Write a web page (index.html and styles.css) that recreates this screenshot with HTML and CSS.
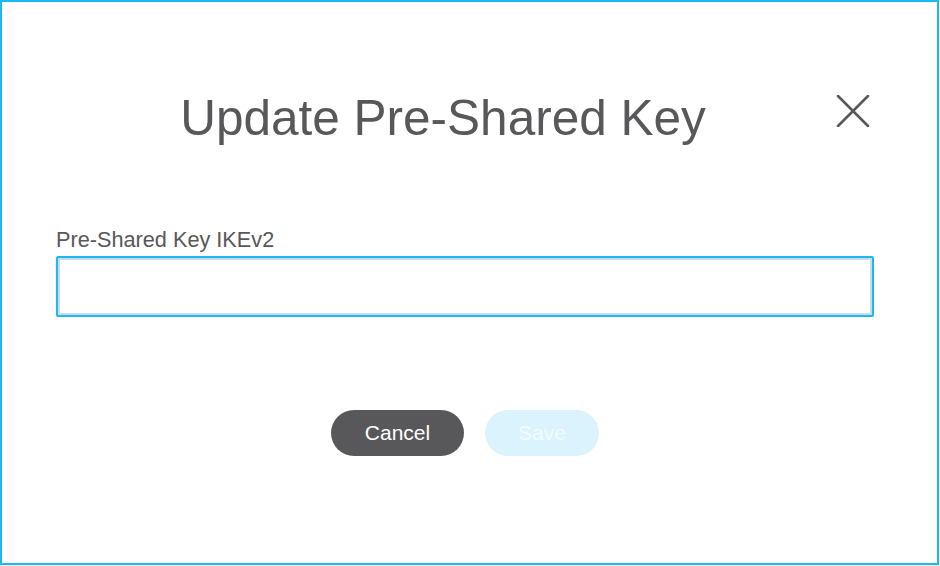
FILE: index.html
```html
<!DOCTYPE html>
<html lang="en">
<head>
<meta charset="utf-8">
<title>Update Pre-Shared Key</title>
<link rel="stylesheet" href="styles.css">
</head>
<body>
<div class="dialog">
  <div class="header">
    <h1 class="title">Update Pre-Shared Key</h1>
    <button class="close" aria-label="Close">
      <svg width="34" height="32" viewBox="0 0 34 32">
        <path d="M2 1 L32 31 M32 1 L2 31" stroke="#58585a" stroke-width="2.6" stroke-linecap="round" fill="none"/>
      </svg>
    </button>
  </div>
  <label class="label" for="psk">Pre-Shared Key IKEv2</label>
  <input class="field" id="psk" type="text">
  <div class="actions">
    <button class="btn btn-cancel">Cancel</button>
    <button class="btn btn-save" disabled>Save</button>
  </div>
</div>
</body>
</html>
```
FILE: styles.css
```css
html, body {
  margin: 0;
  padding: 0;
  background: #ffffff;
}
body {
  font-family: "Liberation Sans", Arial, sans-serif;
  color: #58585a;
}
.dialog {
  box-sizing: border-box;
  width: 939px;
  height: 565px;
  border: 2px solid #1cb9f0;
  padding: 88px 63px 0 54px;
  display: flex;
  flex-direction: column;
  background: #fff;
}
.header {
  display: flex;
  align-items: flex-start;
}
.title {
  flex: 1;
  margin: 0;
  text-align: center;
  font-weight: normal;
  font-size: 49.5px;
  line-height: 56px;
  color: #58585a;
}
.close {
  width: 44px;
  height: 44px;
  padding: 5px 4px 0 0;
  margin: 0;
  border: none;
  background: transparent;
  display: flex;
  justify-content: flex-end;
  align-items: flex-start;
}
.label {
  margin-top: 82px;
  font-size: 21.7px;
  line-height: 24px;
  color: #58585a;
}
.field {
  box-sizing: border-box;
  margin: 4px 0 0 0;
  width: 100%;
  height: 61px;
  border: 2px solid #1cb9f0;
  border-radius: 2px;
  box-shadow: inset 0 0 0 2px #c9dce6;
  background: #fff;
  outline: none;
  padding: 0 12px;
  font-family: inherit;
  font-size: 20px;
}
.actions {
  display: flex;
  justify-content: center;
  gap: 21px;
  margin-top: 93px;
}
.btn {
  height: 46px;
  border: none;
  border-radius: 23px;
  font-family: "Liberation Sans", Arial, sans-serif;
  font-size: 21px;
  padding: 0;
}
.btn-cancel {
  width: 133px;
  background: #58585a;
  color: #ffffff;
}
.btn-save {
  width: 114px;
  background: #daf3fc;
  color: #f3fbfe;
}
```
